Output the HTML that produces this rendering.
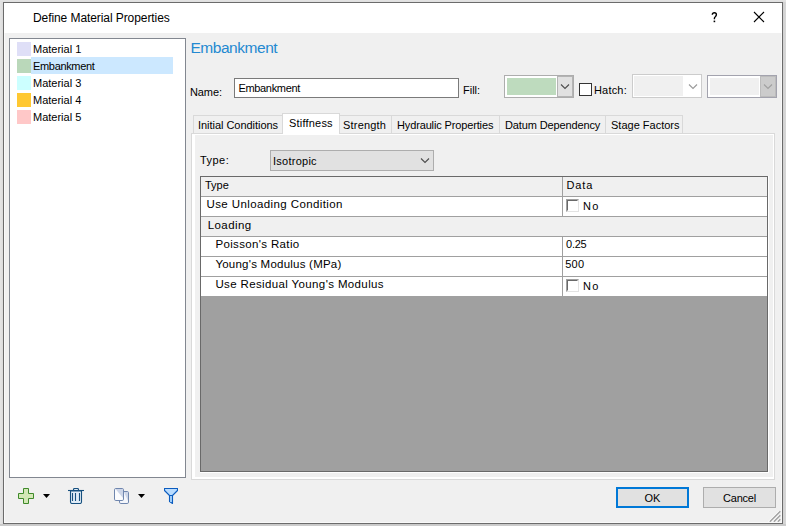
<!DOCTYPE html>
<html><head><meta charset="utf-8">
<style>
*{box-sizing:border-box;margin:0;padding:0}
html,body{width:786px;height:526px;overflow:hidden;background:#ececec;font-family:"Liberation Sans",sans-serif;font-size:11px;color:#000}
.a{position:absolute}
.t{position:absolute;white-space:nowrap;line-height:14px}
.g{position:absolute;white-space:nowrap;line-height:14px;font-size:11.5px}
.sw{position:absolute;left:17px;width:14px;height:14px}
.tab{position:absolute;top:115px;height:18px;background:#f0f0f0;border:1px solid #d9d9d9;border-bottom:none}
.row{position:absolute;left:201px;width:566px;background:#fff;border-bottom:1px solid #a0a0a0}
.cb{position:absolute;width:13px;height:13px;background:#fff;border:1px solid;border-color:#a0a0a0 #e3e3e3 #e3e3e3 #a0a0a0}
.cb:after{content:"";position:absolute;left:0;top:0;width:9px;height:9px;border:1px solid;border-color:#696969 #fff #fff #696969}
</style></head><body>
<!-- window frame + shadow -->
<div class="a" style="left:0;top:0;width:786px;height:2px;background:linear-gradient(#e3e3e3,#dfdfdf)"></div>
<div class="a" style="left:0;top:2px;width:3px;height:522px;background:linear-gradient(to right,#e5e5e5,#dbdbdb)"></div>
<div class="a" style="left:783px;top:2px;width:3px;height:522px;background:linear-gradient(to right,#d2d2d2,#d7d7d7)"></div>
<div class="a" style="left:0;top:524px;width:786px;height:2px;background:linear-gradient(#c8c8c8,#cecece)"></div>
<div class="a" style="left:3px;top:2px;width:780px;height:522px;background:#f0f0f0;border:1px solid #6b6b6b"></div>
<div class="a" style="left:4px;top:3px;width:778px;height:520px;border:1px solid #f9f9f9"></div>
<div class="a" style="left:4px;top:3px;width:778px;height:30px;background:#fff"></div>
<div class="t" style="left:33px;top:11px;font-size:12px;letter-spacing:-0.08px">Define Material Properties</div>
<svg class="a" style="left:710px;top:11px" width="9" height="12"><path d="M2.3 3.7Q2.4 1.7 4.4 1.7Q6.4 1.7 6.4 3.6Q6.4 4.8 5.3 5.7Q4.4 6.4 4.4 7.5V8.3" stroke="#000" stroke-width="1.4" fill="none"/><rect x="3.6" y="9.6" width="1.6" height="1.6" fill="#000"/></svg>
<svg class="a" style="left:753px;top:11px" width="12" height="12"><path d="M1 1L11 11M11 1L1 11" stroke="#000" stroke-width="1.1" fill="none"/></svg>

<!-- list -->
<div class="a" style="left:9px;top:38px;width:177px;height:440px;background:#fff;border:1px solid #828790"></div>
<div class="a" style="left:31px;top:57px;width:142px;height:17px;background:#cce8ff"></div>
<div class="sw" style="top:42px;background:#dfdff7"></div>
<div class="sw" style="top:59px;background:#bad8ba"></div>
<div class="sw" style="top:76px;background:#ccffff"></div>
<div class="sw" style="top:93px;background:#ffc832"></div>
<div class="sw" style="top:110px;background:#ffc8c8"></div>
<div class="t" style="left:33px;top:42px">Material 1</div>
<div class="t" style="left:33px;top:59px;letter-spacing:-0.33px">Embankment</div>
<div class="t" style="left:33px;top:76px">Material 3</div>
<div class="t" style="left:33px;top:93px">Material 4</div>
<div class="t" style="left:33px;top:110px">Material 5</div>

<!-- heading row -->
<div class="t" style="left:190.5px;top:39px;font-size:15.5px;line-height:18px;letter-spacing:-0.47px;color:#2489d1">Embankment</div>
<div class="t" style="left:190px;top:85px;letter-spacing:-0.1px">Name:</div>
<div class="a" style="left:234px;top:78px;width:225px;height:20px;background:#fff;border:1px solid #7a7a7a"></div>
<div class="t" style="left:238.4px;top:81px;letter-spacing:-0.32px">Embankment</div>
<div class="t" style="left:463px;top:83px">Fill:</div>
<!-- fill combo -->
<div class="a" style="left:504px;top:75px;width:70px;height:23px;background:#fff;border:1px solid #adadad"></div>
<div class="a" style="left:507px;top:78px;width:49px;height:17px;background:#bedbbe"></div>
<div class="a" style="left:557px;top:76px;width:16px;height:21px;background:#e1e1e1;border:1px solid #b4b4b4"></div>
<svg class="a" style="left:560px;top:83px" width="10" height="7"><path d="M1 1.5L5 5.5L9 1.5" stroke="#4d4d4d" stroke-width="1.1" fill="none"/></svg>
<!-- hatch -->
<div class="a" style="left:579px;top:83px;width:13px;height:13px;background:#fff;border:1px solid #333"></div>
<div class="t" style="left:594px;top:83px;letter-spacing:0.18px">Hatch:</div>
<div class="a" style="left:632px;top:74px;width:70px;height:24px;background:#fff;border:1px solid #cccccc"></div>
<div class="a" style="left:634px;top:76px;width:49px;height:20px;background:#f0f0f0"></div>
<svg class="a" style="left:688px;top:83px" width="10" height="7"><path d="M1 1.5L5 5.5L9 1.5" stroke="#9a9a9a" stroke-width="1.1" fill="none"/></svg>
<div class="a" style="left:707px;top:75px;width:70px;height:23px;background:#fff;border:1px solid #a3a3ae"></div>
<div class="a" style="left:710px;top:78px;width:49px;height:17px;background:#f0f0f0"></div>
<div class="a" style="left:760px;top:76px;width:16px;height:21px;background:#cccccc;border:1px solid #bcbcbc"></div>
<svg class="a" style="left:763px;top:83px" width="10" height="7"><path d="M1 1.5L5 5.5L9 1.5" stroke="#a0a0a0" stroke-width="1.1" fill="none"/></svg>

<!-- tab panel -->
<div class="a" style="left:191px;top:133px;width:584px;height:347px;background:#fff;border:1px solid #d9d9d9"></div>
<div class="a" style="left:195px;top:135px;width:578px;height:342px;background:#f0f0f0"></div>
<div class="tab" style="left:193px;width:90px"></div>
<div class="tab" style="left:339px;width:53px"></div>
<div class="tab" style="left:391px;width:109px"></div>
<div class="tab" style="left:499px;width:107px"></div>
<div class="tab" style="left:605px;width:78px"></div>
<div class="a" style="left:282px;top:113px;width:58px;height:21px;background:#fff;border:1px solid #d9d9d9;border-bottom:none"></div>
<div class="t" style="left:198px;top:118px;letter-spacing:-0.04px">Initial Conditions</div>
<div class="t" style="left:289px;top:116px;letter-spacing:0.2px">Stiffness</div>
<div class="t" style="left:343px;top:118px;letter-spacing:0.19px">Strength</div>
<div class="t" style="left:397px;top:118px;letter-spacing:-0.14px">Hydraulic Properties</div>
<div class="t" style="left:505px;top:118px;letter-spacing:-0.13px">Datum Dependency</div>
<div class="t" style="left:611px;top:118px">Stage Factors</div>

<div class="t" style="left:200px;top:153px;letter-spacing:0.45px">Type:</div>
<div class="a" style="left:270px;top:150px;width:164px;height:21px;background:#e1e1e1;border:1px solid #adadad"></div>
<div class="t" style="left:273px;top:154px;letter-spacing:0.25px">Isotropic</div>
<svg class="a" style="left:420px;top:157px" width="10" height="7"><path d="M1 1.5L5 5.5L9 1.5" stroke="#4d4d4d" stroke-width="1.1" fill="none"/></svg>

<!-- grid -->
<div class="a" style="left:200px;top:176px;width:569px;height:297px;background:#fff"></div>
<div class="a" style="left:200px;top:176px;width:568px;height:296px;background:#a0a0a0;border:1px solid #696969"></div>
<div class="row" style="top:177px;height:20px;background:#f0f0f0"></div>
<div class="row" style="top:197px;height:20px"></div>
<div class="row" style="top:217px;height:20px;background:#f0f0f0"></div>
<div class="row" style="top:237px;height:20px"></div>
<div class="row" style="top:257px;height:20px"></div>
<div class="row" style="top:277px;height:19px;border-bottom:none"></div>
<div class="a" style="left:562px;top:177px;width:1px;height:40px;background:#a0a0a0"></div>
<div class="a" style="left:562px;top:237px;width:1px;height:59px;background:#a0a0a0"></div>
<div class="t" style="left:205px;top:178px">Type</div>
<div class="t" style="left:566.5px;top:178px;letter-spacing:0.9px">Data</div>
<div class="g" style="left:206.5px;top:197px;letter-spacing:0.4px">Use Unloading Condition</div>
<div class="g" style="left:207.7px;top:218px;letter-spacing:0.42px">Loading</div>
<div class="g" style="left:215.4px;top:237px;letter-spacing:0.35px">Poisson's Ratio</div>
<div class="g" style="left:215.4px;top:257px;letter-spacing:0.23px">Young's Modulus (MPa)</div>
<div class="g" style="left:215.4px;top:277px;letter-spacing:0.37px">Use Residual Young's Modulus</div>
<div class="t" style="left:566px;top:237px;letter-spacing:-0.23px">0.25</div>
<div class="t" style="left:565.3px;top:257px;letter-spacing:0.2px">500</div>
<div class="cb" style="left:566px;top:199px"></div>
<div class="cb" style="left:566px;top:279px"></div>
<div class="t" style="left:583px;top:199px;letter-spacing:1.2px">No</div>
<div class="t" style="left:583px;top:279px;letter-spacing:1.2px">No</div>

<!-- toolbar icons -->
<svg class="a" style="left:18px;top:488px" width="16" height="16"><path d="M5.5 0.5h5v5h5v5h-5v5h-5v-5h-5v-5h5z" fill="#d3e8b6" stroke="#3f8a2a" stroke-width="1"/></svg>
<svg class="a" style="left:43px;top:494px" width="7" height="4"><path d="M0 0h7L3.5 4z" fill="#000"/></svg>
<svg class="a" style="left:68px;top:488px" width="16" height="16"><path d="M5.5 2.5v-1q0-1 1-1h3q1 0 1 1v1" fill="#e8f1fa" stroke="#17507f" stroke-width="1.1"/><path d="M0 2.5h16" stroke="#17507f" stroke-width="1.1"/><path d="M2.5 3v11q0 1.5 1.5 1.5h8q1.5 0 1.5-1.5V3z" fill="#e0ecf7" stroke="#17507f" stroke-width="1.1"/><path d="M4.5 5v8M7.5 5v8M11.5 5v8" stroke="#17507f" stroke-width="1.1"/></svg>
<svg class="a" style="left:114px;top:488px" width="15" height="16"><rect x="5.5" y="3.5" width="9" height="12" rx="1.3" fill="#f4f6fb" stroke="#6f86ae"/><path d="M10 4h4v9z" fill="#ccd5e8"/><rect x="0.5" y="0.5" width="9" height="12" rx="1.3" fill="#fbfcfe" stroke="#6f86ae"/><path d="M1.5 1h7.5v9z" fill="#ccd5e8"/></svg>
<svg class="a" style="left:138px;top:494px" width="7" height="4"><path d="M0 0h7L3.5 4z" fill="#000"/></svg>
<svg class="a" style="left:164px;top:488px" width="14" height="16"><path d="M0.5 0.5H13.5V2.5L8.5 7.5V15.5L5.5 13.5V7.5L0.5 2.5Z" fill="#b9dcff" stroke="#0b5cbf" stroke-width="1.1" stroke-linejoin="round"/><path d="M5.5 7.5H8.5" stroke="#0b5cbf" stroke-width="1"/><rect x="6" y="8" width="2" height="6" fill="#9ccbf8"/></svg>

<!-- buttons -->
<div class="a" style="left:616px;top:487px;width:73px;height:21px;background:#e1e1e1;border:2px solid #0078d7"></div>
<div class="a" style="left:703px;top:487px;width:73px;height:21px;background:#e1e1e1;border:1px solid #adadad"></div>
<div class="t" style="left:616px;width:73px;text-align:center;top:491px">OK</div>
<div class="t" style="left:703px;width:73px;text-align:center;top:491px;letter-spacing:-0.24px">Cancel</div>
<!-- size grip -->
<svg class="a" style="left:768px;top:509px" width="13" height="13"><path d="M1.8 12.7L12.3 2.2M5.8 12.7L12.3 6.2M9.8 12.7L12.3 10.2" stroke="#fff" stroke-width="1.3" transform="translate(-1.2,0)"/><path d="M1.8 12.7L12.3 2.2M5.8 12.7L12.3 6.2M9.8 12.7L12.3 10.2" stroke="#a2a2a2" stroke-width="1.5"/></svg>
</body></html>
